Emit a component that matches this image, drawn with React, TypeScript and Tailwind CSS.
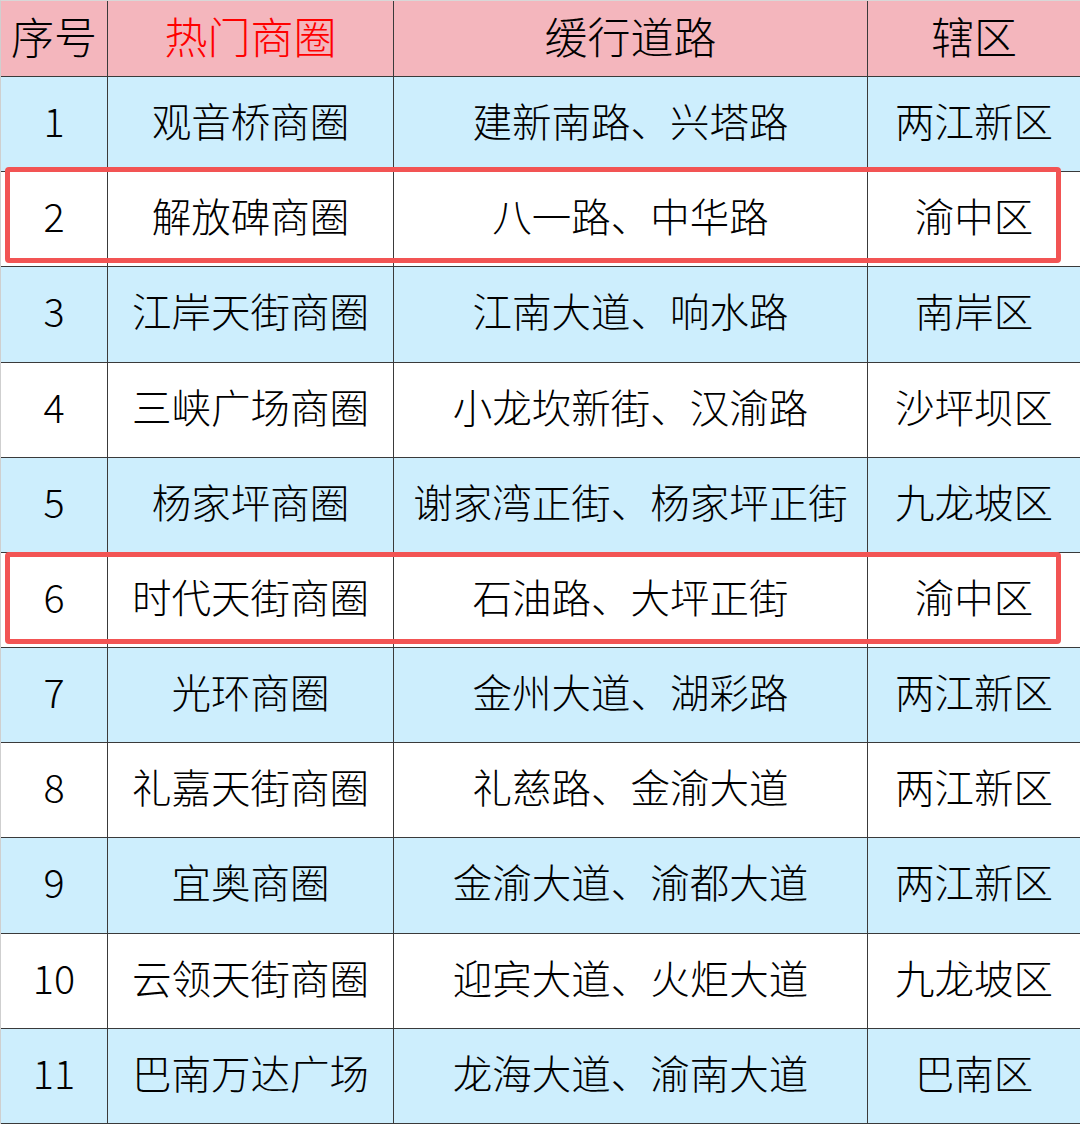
const rows: [string, string, string, string][] = [
  ['1', '观音桥商圈', '建新南路、兴塔路', '两江新区'],
  ['2', '解放碑商圈', '八一路、中华路', '渝中区'],
  ['3', '江岸天街商圈', '江南大道、响水路', '南岸区'],
  ['4', '三峡广场商圈', '小龙坎新街、汉渝路', '沙坪坝区'],
  ['5', '杨家坪商圈', '谢家湾正街、杨家坪正街', '九龙坡区'],
  ['6', '时代天街商圈', '石油路、大坪正街', '渝中区'],
  ['7', '光环商圈', '金州大道、湖彩路', '两江新区'],
  ['8', '礼嘉天街商圈', '礼慈路、金渝大道', '两江新区'],
  ['9', '宜奥商圈', '金渝大道、渝都大道', '两江新区'],
  ['10', '云领天街商圈', '迎宾大道、火炬大道', '九龙坡区'],
  ['11', '巴南万达广场', '龙海大道、渝南大道', '巴南区'],
];

const cell = 'flex items-center justify-center border-r border-b border-[#3a3a3a] whitespace-nowrap';

export default function App() {
  return (
    <div
      className="relative w-[1080px] h-[1124px] bg-white text-black overflow-hidden font-light"
      style={{ fontFamily: '"Noto Sans CJK SC", "Noto Sans", sans-serif' }}
    >
      <div className="grid grid-cols-[107px_286px_474px_213px] grid-rows-[76px_repeat(11,1fr)] h-full border-l border-t border-l-[#cfcfcf] border-t-[#d8d8d8]">
        {/* Header */}
        <div className={`${cell} bg-[#f4b6bd] text-[43px] pb-[7px]`}>序号</div>
        <div className={`${cell} bg-[#f4b6bd] text-[43px] pb-[7px] text-[#ff0000]`}>热门商圈</div>
        <div className={`${cell} bg-[#f4b6bd] text-[43px] pb-[7px]`}>缓行道路</div>
        <div className={`${cell} bg-[#f4b6bd] text-[43px] pb-[7px]`}>辖区</div>

        {rows.map((r, i) => {
          const bg = i % 2 === 0 ? 'bg-[#cdeefd]' : 'bg-white';
          return r.map((t, j) => (
            <div key={`${i}-${j}`} className={`${cell} ${bg} text-[39.5px] pb-[9px]`}>
              {t}
            </div>
          ));
        })}
      </div>

      {/* Highlight boxes */}
      <div className="absolute left-[5px] top-[167px] w-[1056px] h-[96px] border-[5px] border-[#f25454] rounded-[4px]" />
      <div className="absolute left-[5px] top-[552px] w-[1056px] h-[92px] border-[5px] border-[#f25454] rounded-[4px]" />
    </div>
  );
}
